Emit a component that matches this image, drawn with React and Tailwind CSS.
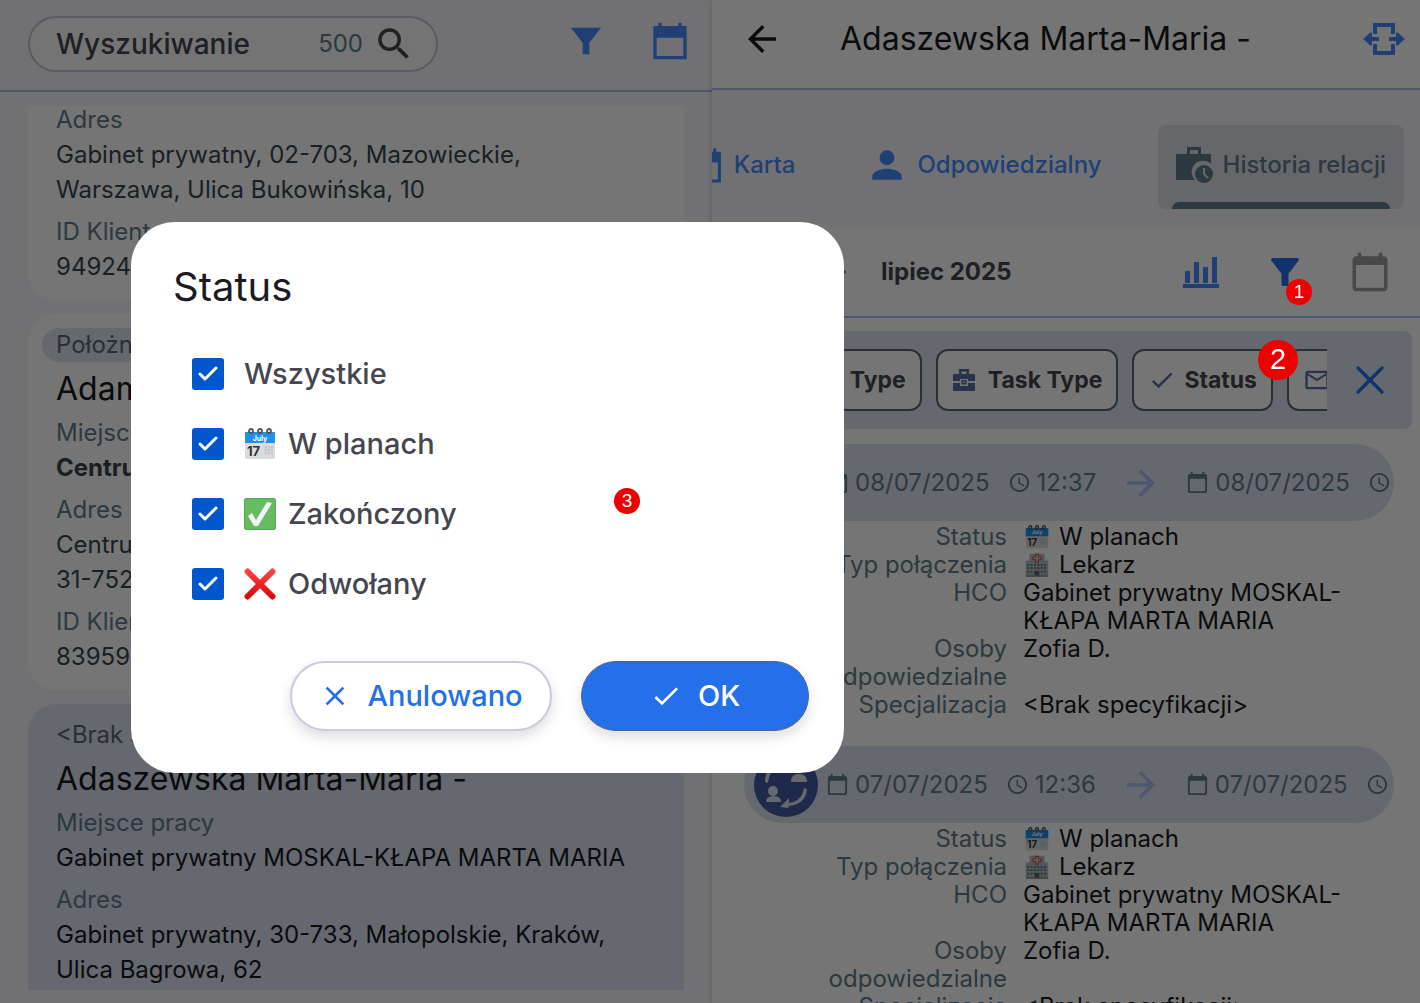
import React, { useState } from 'react';
import { Check, X } from 'lucide-react';
import {
  MdAccessTime,
  MdArrowBack,
  MdArrowForward,
  MdCalendarToday,
  MdCheck,
  MdClose,
  MdFilterAlt,
  MdMailOutline,
  MdPerson,
  MdSearch
} from 'react-icons/md';

const clients = [
  {
    id: 1,
    sections: [
      { label: 'Adres', value: 'Gabinet prywatny, 02-703, Mazowieckie, Warszawa, Ulica Bukowińska, 10' },
      { label: 'ID Klienta', value: '94924' }
    ]
  },
  {
    id: 2,
    chip: 'Położna',
    name: 'Adam',
    sections: [
      { label: 'Miejsce', value: 'Centrum', bold: true },
      { label: 'Adres', value: 'Centrum\n31-752' },
      { label: 'ID Klienta', value: '83959' }
    ]
  },
  {
    id: 3,
    chip: '<Brak specyfikacji>',
    name: 'Adaszewska Marta-Maria -',
    selected: true,
    sections: [
      { label: 'Miejsce pracy', value: 'Gabinet prywatny MOSKAL-KŁAPA MARTA MARIA' },
      { label: 'Adres', value: 'Gabinet prywatny, 30-733, Małopolskie, Kraków, Ulica Bagrowa, 62' }
    ]
  }
];

const visits = [
  { id: 1, date: '08/07/2025', time: '12:37' },
  { id: 2, date: '07/07/2025', time: '12:36' }
];

const statuses = [
  { id: 'all', label: 'Wszystkie' },
  { id: 'planned', label: 'W planach' },
  { id: 'done', label: 'Zakończony' },
  { id: 'cancelled', label: 'Odwołany' }
];

/* Icons */

const FunnelIcon = ({ className }) => (
  <svg viewBox="0 0 24 24" fill="currentColor" className={className}>
    <path d="M3 4c2 2.6 7 9 7 9v7h4v-7s5-6.400 7-9z" />
  </svg>
);

const CalendarSharpIcon = ({ className }) => (
  <svg viewBox="0 0 24 24" fill="currentColor" className={className}>
    <path d="M22 3h-3V1h-2v2H7V1H5v2H2v20h20V3zm-2 18H4V10h16z" />
  </svg>
);

const ExpandIcon = ({ className }) => (
  <svg viewBox="0 0 44 34" fill="none" stroke="currentColor" strokeWidth="4" className={className}>
    <path d="M13 12V3h18v9M13 22v9h18v-9M5 17h12M27 17h12" />
    <path d="M1 17l8-7 1 2v10l-1 2zM43 17l-8-7-1 2v10l1 2z" fill="currentColor" stroke="none" />
  </svg>
);

const WorkHistoryIcon = ({ className }) => (
  <svg viewBox="0 0 40 38" fill="currentColor" className={className}>
    <path d="M1 8h11V1h14v7h10v10a11 11 0 0 0-16 16H1zM15 8h8V4h-8z" fillRule="evenodd" />
    <circle cx="29" cy="28" r="9" />
    <path d="M29 22v6l4 4" fill="none" stroke="#dfe1ea" strokeWidth="2" />
  </svg>
);

const ChartIcon = ({ className }) => (
  <svg viewBox="0 0 36 32" fill="currentColor" className={className}>
    <path d="M2 15h5v12H2zM11 6h5v21h-5zM20 11h5v16h-5zM29 1h5v26h-5zM0 28h36v4H0z" />
  </svg>
);

const ToolboxIcon = ({ className }) => (
  <svg viewBox="0 0 24 24" fill="currentColor" className={className}>
    <path d="M7 6V1h10v5h6v7h-7v-2H8v2H1V6zm2.500 0h5V3.500h-5z" fillRule="evenodd" />
    <path d="M1 15h7v3h8v-3h7v8H1z" />
    <path d="M9.500 12h5v4.500h-5zm1.700 1.500v1.500h1.600v-1.500z" fillRule="evenodd" />
  </svg>
);

const CalendarEmoji = ({ className }) => (
  <svg viewBox="0 0 32 32" className={className}>
    <rect x="1" y="4" width="30" height="27" rx="2" fill="#dcdcde" />
    <path d="M1 15V5q0-1 1-1h28q1 0 1 1v10z" fill="#2190e8" />
    <g fill="none" stroke="#555" strokeWidth="1.800">
      <circle cx="7" cy="3" r="2" />
      <circle cx="16" cy="3" r="2" />
      <circle cx="25" cy="3" r="2" />
    </g>
    <text x="16" y="12.500" textAnchor="middle" fontSize="7" fontWeight="700" fill="#fff" fontFamily="Inter, sans-serif">July</text>
    <text x="3" y="28" fontSize="13" fontWeight="700" fill="#333" fontFamily="Inter, sans-serif">17</text>
    <path d="M20 19h9M20 22h9M20 25h9M22 18v9M25 18v9M28 18v9" stroke="#bbb" strokeWidth="0.600" />
  </svg>
);

const CheckEmoji = ({ className }) => (
  <svg viewBox="0 0 32 32" className={className}>
    <rect x="0.500" y="0.500" width="31" height="31" rx="1.500" fill="#66bb63" stroke="#55a857" />
    <path d="M4 18l4-3 4 7L23 4l5 1-14 23h-4z" fill="#f2f2f2" />
  </svg>
);

const CrossEmoji = ({ className }) => (
  <svg viewBox="0 0 32 32" className={className}>
    <defs>
      <linearGradient id="crossRed" x1="0" y1="0" x2="0" y2="32" gradientUnits="userSpaceOnUse">
        <stop offset="0" stopColor="#ff4a4a" />
        <stop offset="1" stopColor="#d90000" />
      </linearGradient>
    </defs>
    <path d="M3.500 3.500l25 25M28.500 3.500l-25 25" stroke="url(#crossRed)" strokeWidth="6" strokeLinecap="round" />
  </svg>
);

const HospitalEmoji = ({ className }) => (
  <svg viewBox="0 0 32 32" className={className}>
    <path d="M6 1h20v9h5v20H1V10h5z" fill="#b4bfc4" />
    <path d="M1 29h30v3H1z" fill="#8fa58f" />
    <path d="M16 1v12M10 7h12" stroke="#e04545" strokeWidth="5" />
    <path d="M16 2.500v9M11.500 7h9" stroke="#c3ccd2" strokeWidth="2.500" />
    <path d="M3 16h26M3 20h26M3 25h26" stroke="#5e7a8a" strokeWidth="2.500" strokeDasharray="2.500 2" />
    <path d="M13 24h6v6h-6z" fill="#4d6472" />
  </svg>
);

const HandoverIcon = ({ className }) => (
  <svg viewBox="0 0 64 64" className={className}>
    <circle cx="32" cy="32" r="32" fill="#455ba3" />
    <g fill="#dee2f1">
      <circle cx="45" cy="14" r="5" />
      <path d="M37 29q0-8 8-8t8 8z" />
      <circle cx="19" cy="38" r="5" />
      <path d="M12 49q0-6 7.500-6t7.500 6z" />
      <path d="M26 54l9-9v5q13-2 15-15l3 1q-1 15-18 17l-1 2z" />
      <path d="M38 8l-9 9v-5Q15 15 14 30l-3-1Q11 12 29 9V7z" />
    </g>
  </svg>
);

const statusIcons = {
  planned: CalendarEmoji,
  done: CheckEmoji,
  cancelled: CrossEmoji
};

/* Left panel */

const ClientCard = ({ client }) => (
  <article
    className={`pl-7 pr-9 pb-4 ${
      client.selected ? 'bg-[#dee2f1] rounded-t-[28px]' : client.name ? 'bg-white rounded-[28px]' : 'bg-white rounded-b-[28px]'
    }`}
  >
    {client.chip && (
      <div className="flex pt-3.5">
        <span className="h-[34px] -ml-3.5 px-3.5 rounded-full bg-[#dee2f1] text-[#546a75] leading-[34px]">
          {client.chip}
        </span>
      </div>
    )}
    {client.name && <h2 className="mt-[7px] mb-1.5 text-[32px] leading-10 text-[#17181c]">{client.name}</h2>}
    <dl className="flex flex-col gap-[7px]">
      {client.sections.map((section) => (
        <div key={section.label}>
          <dt className="text-[#607d8b]">{section.label}</dt>
          <dd
            className={`whitespace-pre-line ${section.bold ? 'font-bold' : ''} ${
              client.selected ? 'text-[#17181c]' : 'text-[#37474f]'
            }`}
          >
            {section.value}
          </dd>
        </div>
      ))}
    </dl>
  </article>
);

const ClientList = () => (
  <section className="min-w-0 flex flex-col overflow-hidden bg-[#f7f7fc]">
    <header className="h-[92px] shrink-0 flex items-center border-b-2 border-[#a9bdf5] pl-7 pr-[22px] pb-0.5">
      <label className="w-[410px] h-14 flex items-center border-2 border-[#c3c4d8] rounded-full pl-[26px] pr-[21px] bg-[#fcfcff]">
        <input
          type="search"
          aria-label="Wyszukiwanie"
          placeholder="Wyszukiwanie"
          className="min-w-0 flex-1 bg-transparent outline-none text-[28px] font-medium text-[#45464f] placeholder:text-[#45464f]"
        />
        <span className="text-[24px] text-[#607d8b] mr-2.5">500</span>
        <MdSearch className="size-[42px] text-[#45464f]" />
      </label>
      <div className="ml-auto mb-1.5 flex gap-11">
        <button type="button" aria-label="Filtr" className="text-[#448aff]">
          <FunnelIcon className="size-10" />
        </button>
        <button type="button" aria-label="Kalendarz" className="text-[#448aff]">
          <CalendarSharpIcon className="size-10" />
        </button>
      </div>
    </header>
    <div className="flex-1 min-h-0 overflow-hidden mt-3.5 mb-[13px] px-7 text-[24px] leading-[35px]">
      <div className="flex flex-col gap-3.5 -mt-1">
        {clients.map((client) => (
          <ClientCard key={client.id} client={client} />
        ))}
      </div>
    </div>
  </section>
);

/* Right panel */

const Marker = ({ className, children }) => (
  <span
    className={`rounded-full bg-[#ee0000] text-white flex items-center justify-center font-['Liberation_Sans',sans-serif] ${className}`}
  >
    {children}
  </span>
);

const DateTime = ({ date, time }) => (
  <span className="flex shrink-0 items-center text-[#607d8b]">
    <MdCalendarToday className="size-[23px] mr-1.5" />
    {date}
    <MdAccessTime className="size-[23px] ml-[18px] mr-1.5" />
    {time}
  </span>
);

const Detail = ({ label, icon, children }) => (
  <>
    <dt className="text-right text-[#607d8b]">{label}</dt>
    <dd className="text-[#17181c] flex items-start">
      {icon}
      <span>{children}</span>
    </dd>
  </>
);

const VisitCard = ({ visit }) => (
  <article className="mb-7">
    <div className="h-[77px] flex items-center rounded-full bg-[#dee2f1] overflow-hidden pl-2.5">
      <HandoverIcon className="size-16 shrink-0 mr-2" />
      <DateTime date={visit.date} time={visit.time} />
      <MdArrowForward className="size-[42px] shrink-0 mx-6 text-[#a9bdf5]" />
      <DateTime date={visit.date} />
    </div>
    <dl className="grid grid-cols-[191px_1fr] gap-x-4 pl-[72px] leading-7 pt-0.5 -mb-px">
      <Detail label="Status" icon={<CalendarEmoji className="size-6 mt-0.5 mr-2.5 ml-0.5 shrink-0" />}>W planach</Detail>
      <Detail label="Typ połączenia" icon={<HospitalEmoji className="size-6 mt-0.5 mr-2.5 ml-0.5 shrink-0" />}>Lekarz</Detail>
      <Detail label="HCO">Gabinet prywatny MOSKAL-KŁAPA MARTA MARIA</Detail>
      <Detail label="Osoby odpowiedzialne">Zofia D.</Detail>
      <Detail label="Specjalizacja">&lt;Brak specyfikacji&gt;</Detail>
    </dl>
  </article>
);

const chipClass =
  'relative shrink-0 h-[62px] flex items-center rounded-xl border-2 border-[#546a75] bg-white font-bold text-[#45464f]';

const ClientHistory = () => (
  <section className="min-w-0 flex flex-col overflow-hidden bg-white text-[24px] shadow-[0_0_6px_#0003]">
    <header className="h-[90px] shrink-0 flex items-center border-b-2 border-[#a9bdf5] pl-[29px] pr-3.5 pb-2.5">
      <button type="button" aria-label="Wstecz" className="text-[#17181c]">
        <MdArrowBack className="size-[42px]" />
      </button>
      <h1 className="ml-[57px] flex-1 text-[32px] text-[#17181c] whitespace-nowrap">Adaszewska Marta-Maria -</h1>
      <button type="button" aria-label="Rozszerz" className="text-[#448aff]">
        <ExpandIcon className="w-11 h-[34px]" />
      </button>
    </header>

    <nav className="h-[138px] shrink-0 flex items-center justify-end bg-[#f7f7fc] px-4 pt-4 text-[#448aff]">
      <button type="button" className="shrink-0 flex items-center pb-1 font-medium">
        <CalendarSharpIcon className="size-[37px] mr-2.5" />
        Karta
      </button>
      <button type="button" className="shrink-0 flex items-center pb-1 font-medium ml-[70px]">
        <MdPerson className="size-11 mr-2" />
        Odpowiedzialny
      </button>
      <button
        type="button"
        className="relative shrink-0 h-[84px] flex items-center rounded-lg bg-[#dfe1ea] text-[#607d8b] font-medium ml-14 pl-[17px] pr-[18px] pb-1"
      >
        <WorkHistoryIcon className="w-10 h-[38px] mr-2" />
        Historia relacji
        <span className="absolute bottom-0 inset-x-3.5 h-[7px] rounded-t-lg bg-[#607d8b]" />
      </button>
    </nav>

    <div className="h-[90px] shrink-0 flex items-center border-b-2 border-[#a9bdf5] pl-[101px] pr-[29px]">
      <button type="button" aria-label="Poprzedni miesiąc" className="text-[#448aff]">
        <MdArrowForward className="size-10" />
      </button>
      <span className="ml-7 font-bold text-[#45464f]">lipiec 2025</span>
      <div className="ml-auto flex items-center">
        <button type="button" aria-label="Wykres" className="text-[#448aff]">
          <ChartIcon className="w-9 h-8" />
        </button>
        <button type="button" aria-label="Filtr" className="relative ml-[45px] text-[#2470eb]">
          <MdFilterAlt className="size-[42px]" />
          <Marker className="absolute top-7 left-[22px] z-20 size-[26px] text-[19px]">1</Marker>
        </button>
        <button type="button" aria-label="Kalendarz" className="ml-[43px] text-[#9e9e9e]">
          <MdCalendarToday className="size-[42px]" />
        </button>
      </div>
    </div>

    <div className="h-[98px] shrink-0 flex items-center rounded-lg bg-[#dee2f1] mt-[13px] ml-4 mr-2 pr-[18px] text-[23px]">
      <div className="flex-1 min-w-0 h-full flex items-center justify-end overflow-hidden gap-3.5">
        <button type="button" className={`${chipClass} px-3.5`}>
          Type
        </button>
        <button type="button" className={`${chipClass} px-3.5`}>
          <ToolboxIcon className="size-6 mr-3 text-[#5a6da8]" />
          Task Type
        </button>
        <button type="button" className={`${chipClass} px-3.5`}>
          <MdCheck className="size-7 mr-2 text-[#5a6da8]" />
          Status
          <Marker className="absolute -top-[11px] -right-[27px] z-20 size-10 text-[29px] font-normal">2</Marker>
        </button>
        <button type="button" aria-label="E-mail" className={`${chipClass} w-10 rounded-r-none border-r-0 pl-3.5`}>
          <MdMailOutline className="size-7 shrink-0 text-[#5a6da8]" />
        </button>
      </div>
      <button type="button" aria-label="Zamknij filtry" className="ml-[19px] text-[#2470eb]">
        <X className="size-12" strokeWidth={1.7} />
      </button>
    </div>

    <div className="flex-1 min-h-0 overflow-hidden pt-[15px] pl-8 pr-[26px]">
      {visits.map((visit) => (
        <VisitCard key={visit.id} visit={visit} />
      ))}
    </div>
  </section>
);

/* Status dialog */

const StatusDialog = ({ checked, onToggle }) => (
  <div className="fixed inset-0 z-10 flex items-center bg-black/54 pl-[131px] pb-2">
    <div
      role="dialog"
      aria-labelledby="status-title"
      className="w-full max-w-[713px] rounded-[44px] bg-white pt-10 pb-[42px] pl-[42px] pr-[35px]"
    >
      <h2 id="status-title" className="text-[40px] leading-[50px] text-[#1b1b21]">
        Status
      </h2>
      <div className="relative mt-[27px] pl-[19px]">
        {statuses.map(({ id, label }) => {
          const Icon = statusIcons[id];
          return (
            <label key={id} className="h-[70px] flex items-center text-[29px] font-medium text-[#45464f]">
              <span className="relative size-8 mr-5">
                <input
                  type="checkbox"
                  checked={checked[id]}
                  onChange={() => onToggle(id)}
                  className="block size-8 appearance-none rounded-[3px] border-2 border-[#0057ce] checked:bg-[#0057ce]"
                />
                {checked[id] && (
                  <Check className="absolute top-1 left-1 size-6 text-white pointer-events-none" strokeWidth={3} />
                )}
              </span>
              {Icon && <Icon className="size-8 mr-3" />}
              {label}
            </label>
          );
        })}
        <Marker className="absolute top-[149px] left-[441px] size-[26px] text-[19px]">3</Marker>
      </div>
      <div className="mt-[42px] flex justify-end gap-[29px] text-[29px] font-medium">
        <button
          type="button"
          className="h-[70px] w-[262px] flex items-center justify-center rounded-full border-2 border-[#c8cae0] bg-white text-[#2470eb] shadow-[0_6px_14px_#0002]"
        >
          <MdClose className="size-8 mr-4" />
          Anulowano
        </button>
        <button
          type="button"
          className="h-[70px] w-[228px] flex items-center justify-center rounded-full border border-[#5a5f80] bg-[#2470eb] text-white shadow-[0_6px_14px_#0002]"
        >
          <MdCheck className="size-8 mr-4" />
          OK
        </button>
      </div>
    </div>
  </div>
);

const App = () => {
  const [checked, setChecked] = useState({ all: true, planned: true, done: true, cancelled: true });

  const toggle = (id) => setChecked((prev) => ({ ...prev, [id]: !prev[id] }));

  return (
    <div className="h-screen overflow-hidden font-[Inter,sans-serif]">
      <main className="h-full grid grid-cols-[178fr_177fr]">
        <ClientList />
        <ClientHistory />
      </main>
      <StatusDialog checked={checked} onToggle={toggle} />
    </div>
  );
};

export default App;
